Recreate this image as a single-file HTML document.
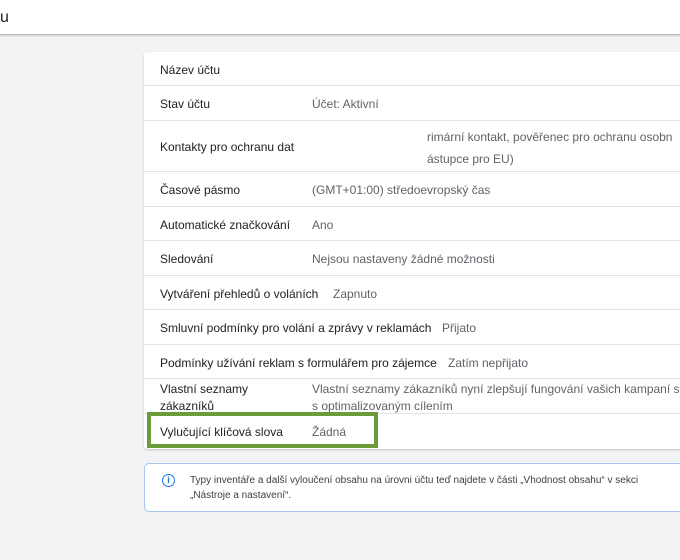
<!DOCTYPE html>
<html><head><meta charset="utf-8"><style>
*{margin:0;padding:0;box-sizing:border-box}
body{width:680px;height:560px;overflow:hidden;background:#f1f3f4;font-family:"Liberation Sans",Arial,sans-serif;color:#202124;position:relative}
.top{position:absolute;left:0;top:0;width:680px;height:35px;background:#fff;border-bottom:1px solid #b8b8b8;box-shadow:0 1px 2px rgba(0,0,0,.15);font-size:16px;padding:9px 0 0 0}
.card{position:absolute;left:144px;top:52px;width:540px;height:397px;background:#fff;border-radius:3px;box-shadow:0 1px 2px rgba(0,0,0,.2)}
.row{position:absolute;left:0;width:540px;border-bottom:1px solid #e3e3e3;font-size:12px}
.row span{position:absolute}
.l{left:16px}
.v{color:#5f6368}
.green{position:absolute;left:147px;top:412px;width:231px;height:36px;border:4px solid #6b9b3a}
.info{position:absolute;left:144px;top:463px;width:545px;height:49px;background:#fff;border:1px solid #a8c4f0;border-radius:5px;font-size:10px;color:#3c4043;line-height:15px;padding:9px 0 0 45px}
.ic{position:absolute;left:17px;top:10px;width:13px;height:13px;border:1.5px solid #1a73e8;border-radius:50%;color:#1a73e8;font-size:9px;font-weight:bold;text-align:center;line-height:10px}
</style></head><body>
<div class="top">u</div>
<div class="card">
<div class="row" style="top:0;height:34px"><span class="l" style="top:11px">Název účtu</span></div>
<div class="row" style="top:34px;height:35px"><span class="l" style="top:11px">Stav účtu</span><span class="v" style="left:168px;top:11px">Účet: Aktivní</span></div>
<div class="row" style="top:69px;height:51px"><span class="l" style="top:19px">Kontakty pro ochranu dat</span><span class="v" style="left:283px;top:9px;white-space:nowrap">rimární kontakt, pověřenec pro ochranu osobn</span><span class="v" style="left:283px;top:31px">ástupce pro EU)</span></div>
<div class="row" style="top:120px;height:35px"><span class="l" style="top:11px">Časové pásmo</span><span class="v" style="left:168px;top:11px">(GMT+01:00) středoevropský čas</span></div>
<div class="row" style="top:155px;height:34px"><span class="l" style="top:11px">Automatické značkování</span><span class="v" style="left:168px;top:11px">Ano</span></div>
<div class="row" style="top:189px;height:35px"><span class="l" style="top:11px">Sledování</span><span class="v" style="left:168px;top:11px">Nejsou nastaveny žádné možnosti</span></div>
<div class="row" style="top:224px;height:34px"><span class="l" style="top:11px">Vytváření přehledů o voláních</span><span class="v" style="left:189px;top:11px">Zapnuto</span></div>
<div class="row" style="top:258px;height:35px"><span class="l" style="top:11px">Smluvní podmínky pro volání a zprávy v reklamách</span><span class="v" style="left:298px;top:11px">Přijato</span></div>
<div class="row" style="top:293px;height:34px"><span class="l" style="top:11px">Podmínky užívání reklam s formulářem pro zájemce</span><span class="v" style="left:304px;top:11px">Zatím nepřijato</span></div>
<div class="row" style="top:327px;height:35px"><span class="l" style="top:2px;line-height:17px">Vlastní seznamy<br>zákazníků</span><span class="v" style="left:168px;top:2px;line-height:17px;white-space:nowrap">Vlastní seznamy zákazníků nyní zlepšují fungování vašich kampaní s o<br>s optimalizovaným cílením</span></div>
<div class="row" style="top:362px;height:35px;border:none"><span class="l" style="top:11px">Vylučující klíčová slova</span><span class="v" style="left:168px;top:11px">Žádná</span></div>
</div>
<div class="green"></div>
<div class="info"><div class="ic">i</div>Typy inventáře a další vyloučení obsahu na úrovni účtu teď najdete v části „Vhodnost obsahu“ v sekci<br>„Nástroje a nastavení“.</div>
</body></html>
